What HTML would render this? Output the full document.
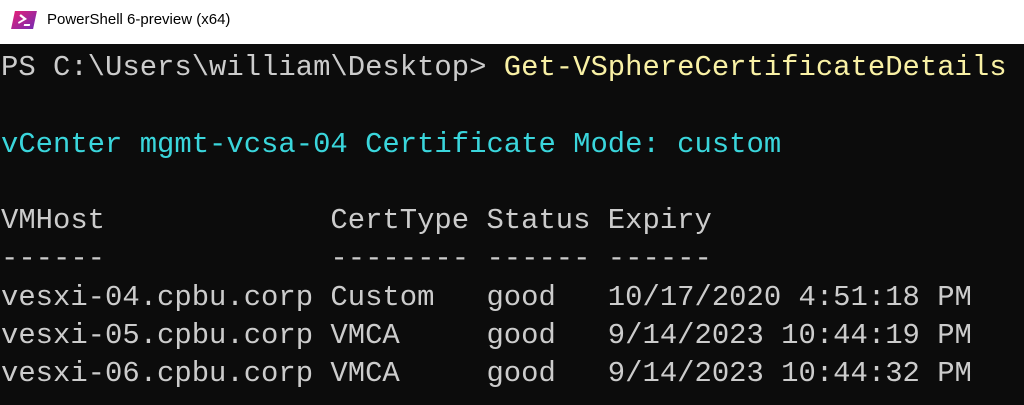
<!DOCTYPE html>
<html><head><style>
body{margin:0;width:1024px;height:405px;overflow:hidden;background:#0c0c0c;position:relative}
.tb{position:absolute;left:0;top:0;width:1024px;height:44px;background:#fff}
.tt{position:absolute;left:47px;top:11px;font:15px "Liberation Sans",sans-serif;color:#000}
.ic{position:absolute;left:13px;top:11px;width:22px;height:18px;background:linear-gradient(135deg,#e0207a,#7a2ab0);transform:skewX(-12deg)}
pre{position:absolute;left:1px;top:49px;margin:0;font:28.9px/38.3px "Liberation Mono",monospace;color:#cccccc}
.y{color:#f9f1a5}.c{color:#3ad6dc}
</style></head><body>
<div class="tb"><div class="ic"><svg width="22" height="18" style="position:absolute;left:2px;top:0"><path d="M4 4l6 4-6 4" stroke="#fff" stroke-width="2" fill="none"/><path d="M10 14h6" stroke="#fff" stroke-width="2"/></svg></div><div class="tt">PowerShell 6-preview (x64)</div></div>
<pre>PS C:\Users\william\Desktop&gt; <span class="y">Get-VSphereCertificateDetails</span>

<span class="c">vCenter mgmt-vcsa-04 Certificate Mode: custom</span>

VMHost             CertType Status Expiry
------             -------- ------ ------
vesxi-04.cpbu.corp Custom   good   10/17/2020 4:51:18 PM
vesxi-05.cpbu.corp VMCA     good   9/14/2023 10:44:19 PM
vesxi-06.cpbu.corp VMCA     good   9/14/2023 10:44:32 PM</pre>
</body></html>
